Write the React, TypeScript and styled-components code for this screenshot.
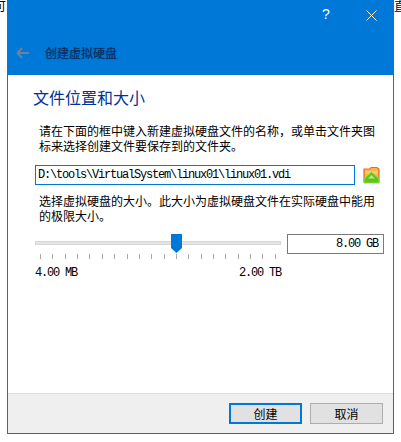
import React from "react";
import styled, { createGlobalStyle } from "styled-components";

const GlobalStyle = createGlobalStyle`
  html, body {
    margin: 0;
    padding: 0;
    background: #fff;
    overflow: hidden;
  }
  body {
    font-family: "Noto Sans CJK SC", "Liberation Sans", sans-serif;
    font-size: 12px;
    color: #000;
  }
`;

const mono = `"Liberation Mono", "DejaVu Sans Mono", monospace`;

const Page = styled.div`
  position: relative;
  width: 401px;
  height: 442px;
  overflow: hidden;
`;

// bits of the document text showing on both sides of the dialog
const BehindText = styled.span<{ $left: number }>`
  position: absolute;
  top: -2px;
  left: ${(p) => p.$left}px;
  font-size: 12px;
  line-height: 16px;
`;

const Dialog = styled.div`
  position: relative;
  margin-left: 7px;
  width: 387px;
  height: 434px;
  box-sizing: border-box;
  background: #fff;
  border: 1px solid #0078d7;
  border-top: 0;
  display: flex;
  flex-direction: column;
`;

const Header = styled.header`
  height: 75px;
  margin: 0 -1px;
  background: #0078d7;
  display: flex;
  flex-direction: column;
`;

const TitleBar = styled.div`
  height: 30px;
  display: flex;
  justify-content: flex-end;
  align-items: center;
  padding-right: 17px;
  gap: 36px;
  color: #fff;
`;

const Help = styled.span`
  font-family: "Liberation Sans", sans-serif;
  font-size: 14px;
  line-height: 14px;
  width: 8px;
  margin-top: -2px;
`;

const NavRow = styled.div`
  display: flex;
  align-items: center;
  height: 16px;
  margin-top: 15px;
  padding-left: 9px;
  gap: 16px;
`;

const HeaderTitle = styled.span`
  font-size: 12px;
  line-height: 16px;
  color: #0a2f5f;
  text-shadow: 0 0 1px rgba(0, 40, 90, 0.6);
`;

const Body = styled.main`
  flex: 1;
  padding: 12px 0 0 25px;
  display: flex;
  flex-direction: column;
`;

const PageTitle = styled.h1`
  margin: 0;
  font-size: 16px;
  font-weight: 400;
  line-height: 20px;
  color: #003399;
`;

const Para = styled.p<{ $top: number }>`
  margin: ${(p) => p.$top}px 0 0 6px;
  width: 340px;
  font-size: 12px;
  line-height: 15px;
`;

const PathRow = styled.div`
  display: flex;
  align-items: center;
  gap: 8px;
  margin: 12px 0 0 2px;
`;

const PathInput = styled.div`
  width: 320px;
  height: 20px;
  box-sizing: border-box;
  border: 1px solid #0078d7;
  padding-left: 2px;
  font-family: ${mono};
  font-size: 12px;
  letter-spacing: -1.2px;
  line-height: 18px;
  white-space: nowrap;
`;

const SizeRow = styled.div`
  display: flex;
  align-items: flex-start;
  gap: 6px;
  margin: 11px 0 0 2px;
`;

const SliderColumn = styled.div`
  width: 246px;
  display: flex;
  flex-direction: column;
`;

const TrackArea = styled.div`
  position: relative;
  height: 20px;
  box-sizing: border-box;
  padding-bottom: 2px;
  display: flex;
  align-items: center;
`;

const Track = styled.div`
  width: 100%;
  height: 4px;
  box-sizing: border-box;
  background: #e4e4e4;
  border: 1px solid #d8d8d8;
`;

const Thumb = styled.svg<{ $left: number }>`
  position: absolute;
  top: 0;
  left: ${(p) => p.$left}px;
`;

const Ticks = styled.div`
  display: flex;
  justify-content: space-between;
  padding: 0 5px;
`;

const Tick = styled.i`
  width: 1px;
  height: 5px;
  background: #a9a9a0;
`;

const Scale = styled.div`
  display: flex;
  justify-content: space-between;
  margin-top: 7px;
  font-family: ${mono};
  font-size: 12px;
  letter-spacing: -1.2px;
  line-height: 14px;
`;

const SizeBox = styled.div`
  width: 97px;
  height: 20px;
  box-sizing: border-box;
  border: 1px solid #7a7a7a;
  padding-right: 5px;
  text-align: right;
  font-family: ${mono};
  font-size: 12px;
  letter-spacing: -1.2px;
  line-height: 18px;
`;

const Footer = styled.footer`
  height: 40px;
  box-sizing: border-box;
  background: #efefef;
  border-top: 1px solid #dcdcdc;
  display: flex;
  justify-content: flex-end;
  gap: 8px;
  padding: 9px 10px 0 0;
`;

const Button = styled.button<{ $primary?: boolean }>`
  width: 73px;
  height: 21px;
  box-sizing: border-box;
  padding: 0;
  background: #e1e1e1;
  border: ${(p) => (p.$primary ? "2px solid #0078d7" : "1px solid #adadad")};
  font-family: inherit;
  font-size: 12px;
  line-height: 16px;
  color: #000;
`;

const FolderIcon = () => (
  <svg width="17" height="18" viewBox="0 0 17 18">
    <path d="M1 3h6l1 -1.500h6l2 1.500v13h-15z" fill="#f9b44a" stroke="#e8692a" strokeWidth="1.200" />
    <path d="M2.500 5h12v3h-12z" fill="#fcc96c" />
    <path d="M8.500 6l7.500 7v4h-15v-4z" fill="#5cc41c" stroke="#8ddc4a" strokeWidth="1" />
    <path d="M8.500 9l3.500 3.500h-7z" fill="#b4ec78" />
  </svg>
);

const App = () => {
  return (
    <Page>
      <GlobalStyle />
      <BehindText $left={-6}>可</BehindText>
      <BehindText $left={394}>直</BehindText>
      <Dialog>
        <Header>
          <TitleBar>
            <Help>?</Help>
            <svg width="11" height="11" viewBox="0 0 11 11">
              <path d="M0.500 0.500l10 10M10.500 0.500l-10 10" stroke="#fff" strokeWidth="1" fill="none" />
            </svg>
          </TitleBar>
          <NavRow>
            <svg width="13" height="12" viewBox="0 0 13 12">
              <path d="M6 1L1.500 6L6 11M2 6h11" stroke="#6f8198" strokeWidth="2" fill="none" />
            </svg>
            <HeaderTitle>创建虚拟硬盘</HeaderTitle>
          </NavRow>
        </Header>
        <Body>
          <PageTitle>文件位置和大小</PageTitle>
          <Para $top={16}>
            请在下面的框中键入新建虚拟硬盘文件的名称，或单击文件夹图标来选择创建文件要保存到的文件夹。
          </Para>
          <PathRow>
            <PathInput>D:\tools\VirtualSystem\linux01\linux01.vdi</PathInput>
            <FolderIcon />
          </PathRow>
          <Para $top={8}>
            选择虚拟硬盘的大小。此大小为虚拟硬盘文件在实际硬盘中能用的极限大小。
          </Para>
          <SizeRow>
            <SliderColumn>
              <TrackArea>
                <Track />
                <Thumb $left={136} width="11" height="19" viewBox="0 0 11 19">
                  <path d="M0 0h11v14l-5.500 5l-5.500 -5z" fill="#0078d7" />
                </Thumb>
              </TrackArea>
              <Ticks>
                {Array.from({ length: 20 }, (_, i) => (
                  <Tick key={i} />
                ))}
              </Ticks>
              <Scale>
                <span>4.00 MB</span>
                <span>2.00 TB</span>
              </Scale>
            </SliderColumn>
            <SizeBox>8.00 GB</SizeBox>
          </SizeRow>
        </Body>
        <Footer>
          <Button $primary>创建</Button>
          <Button>取消</Button>
        </Footer>
      </Dialog>
    </Page>
  );
};

export default App;
